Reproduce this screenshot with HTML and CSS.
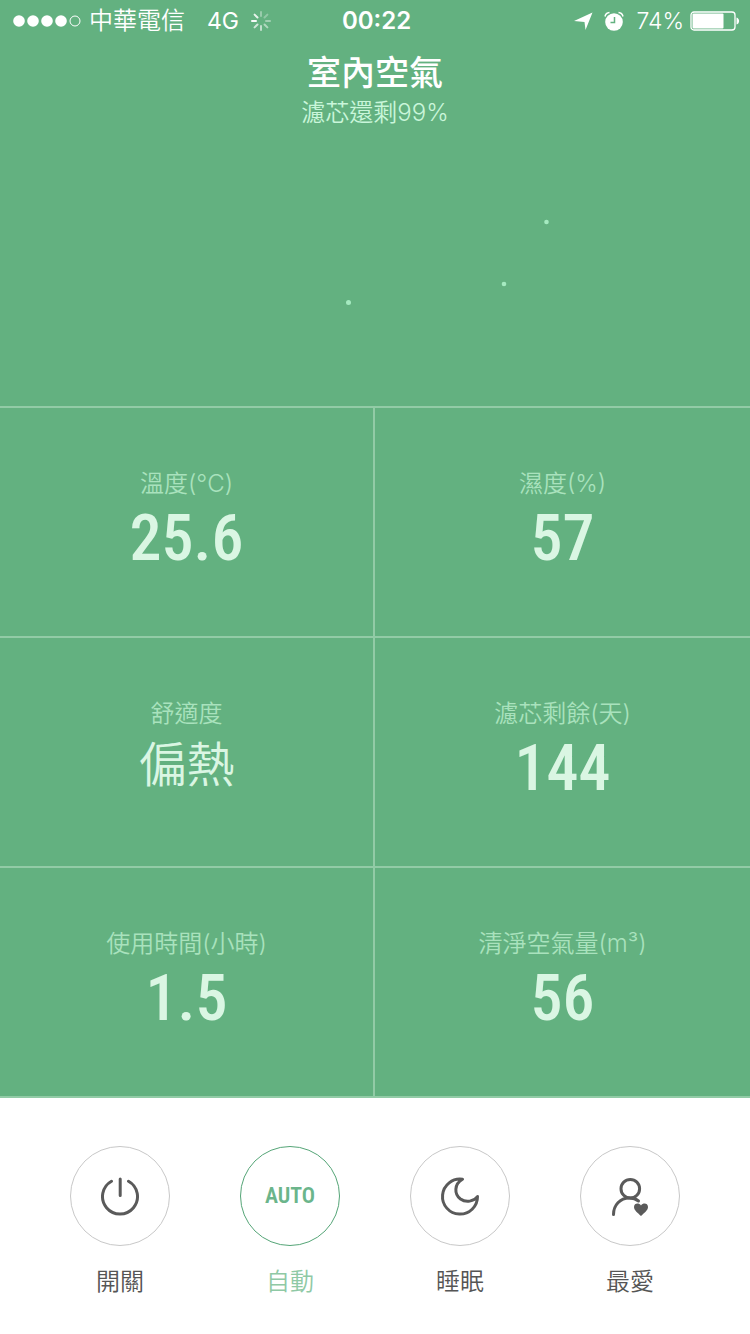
FILE: index.html
```
<!DOCTYPE html>
<html lang="zh-Hant">

<head>
    <meta charset="UTF-8">
    <meta name="viewport" content="width=device-width, initial-scale=1.0">
    <title>室內空氣</title>
    <link rel="stylesheet" href="styles.css">
</head>

<body>
    <div class="status-bar">
        <div class="status-left">
            <svg class="signal" width="68" height="12" viewBox="0 0 68 12" fill="#fff">
                <circle cx="6" cy="6" r="5.800"/>
                <circle cx="20" cy="6" r="5.800"/>
                <circle cx="34" cy="6" r="5.800"/>
                <circle cx="48" cy="6" r="5.800"/>
                <circle cx="62" cy="6" r="5" fill="none" stroke="#fff"/>
            </svg>
            <span class="carrier">中華電信</span>
            <span class="network">4G</span>
            <svg width="20" height="20" viewBox="-10 -10 20 20" stroke="#fff" stroke-width="2" stroke-linecap="round">
                <path d="M0-5V-9" opacity=".35"/>
                <path d="M3.500-3.500L6.400-6.400" opacity=".3"/>
                <path d="M5 0H9" opacity=".4"/>
                <path d="M3.500 3.500L6.400 6.400" opacity=".5"/>
                <path d="M0 5V9" opacity=".6"/>
                <path d="M-3.500 3.500L-6.400 6.400" opacity=".7"/>
                <path d="M-5 0H-9" opacity=".95"/>
                <path d="M-3.500-3.500L-6.400-6.400" opacity=".85"/>
            </svg>
        </div>
        <span class="clock">00:22</span>
        <div class="status-right">
            <svg width="20" height="20" viewBox="0 0 20 20" fill="#fff">
                <path d="M18.500 1.500L11.500 19L10.500 11L0 10Z"/>
            </svg>
            <svg width="20" height="20" viewBox="0 0 20 20">
                <circle cx="10" cy="11" r="8.800" fill="#fff"/>
                <path d="M1 5.500A5 5 0 0 1 5.500 1.500M19 5.500A5 5 0 0 0 14.500 1.500" fill="none" stroke="#fff" stroke-width="1.500"/>
                <path d="M10.500 6V11.500H6.500" fill="none" stroke="#63b180" stroke-width="1.500"/>
            </svg>
            <span class="percent">74%</span>
            <svg width="50" height="20" viewBox="0 0 50 20">
                <rect x="1" y="1" width="44" height="18" rx="3" fill="none" stroke="#fff" stroke-width="1.300"/>
                <rect x="2.500" y="2.500" width="31" height="15" rx="1" fill="#fff"/>
                <path d="M46.500 6.500C50 7.500 50 12.500 46.500 13.500Z" fill="#fff"/>
            </svg>
        </div>
    </div>

    <main>
        <div class="hero">
            <h1>室內空氣</h1>
            <p>濾芯還剩99%</p>
            <svg class="particles" viewBox="0 0 750 200" fill="#a5eac0">
                <circle cx="546.500" cy="62" r="2.300"/>
                <circle cx="504" cy="124" r="2.300"/>
                <circle cx="348.500" cy="142.500" r="2.500"/>
            </svg>
        </div>

        <div class="stats">
            <div class="stat">
                <span class="label">溫度(°C)</span>
                <span class="value">25.6</span>
            </div>
            <div class="stat">
                <span class="label">濕度(%)</span>
                <span class="value">57</span>
            </div>
            <div class="stat">
                <span class="label">舒適度</span>
                <span class="value value-text">偏熱</span>
            </div>
            <div class="stat">
                <span class="label">濾芯剩餘(天)</span>
                <span class="value">144</span>
            </div>
            <div class="stat">
                <span class="label">使用時間(小時)</span>
                <span class="value">1.5</span>
            </div>
            <div class="stat">
                <span class="label">清淨空氣量(m³)</span>
                <span class="value">56</span>
            </div>
        </div>
    </main>

    <footer class="controls">
        <button type="button" class="control">
            <span class="circle">
                <svg width="40" height="40" viewBox="0 0 40 40">
                    <path d="M11.500 5.200A17.500 17.500 0 1 0 28.500 5.200M20.200 3V19.500"/>
                </svg>
            </span>
            <span>開關</span>
        </button>
        <button type="button" class="control active">
            <span class="circle">AUTO</span>
            <span>自動</span>
        </button>
        <button type="button" class="control">
            <span class="circle">
                <svg width="40" height="40" viewBox="0 0 40 40">
                    <path d="M22.500 3.300A17.500 17.500 0 1 0 37.500 20.500C34 25.500 26 27 20.500 23C14 18 14 8 22.500 3.300Z"/>
                </svg>
            </span>
            <span>睡眠</span>
        </button>
        <button type="button" class="control">
            <span class="circle">
                <svg width="40" height="40" viewBox="0 0 40 40">
                    <circle cx="20.300" cy="12.700" r="9.300"/>
                    <path d="M3.500 38.500C3.500 29 10 22 19.500 22C23 22 26 23 28.500 25"/>
                    <path class="heart" d="M31 40C28 37 24 34.500 24 31C24 27 29 26.500 31 29.500C33 26.500 38 27 38 31C38 34.500 34 37 31 40Z"/>
                </svg>
            </span>
            <span>最愛</span>
        </button>
    </footer>
</body>

</html>
```
FILE: styles.css
```
* {
    box-sizing: border-box;
}

body {
    display: flex;
    flex-direction: column;
    min-height: 100vh;
    margin: 0;
    background-color: #63b180;
    color: #fff;
    font-family: Inter, "Noto Sans CJK TC", sans-serif;
    font-size: 24px;
}

.status-bar {
    display: grid;
    grid-template-columns: 1fr auto 1fr;
    align-items: center;
    height: 40px;
    padding: 0 10px 0 13px;
    line-height: 42px;
}

.status-left,
.status-right {
    display: flex;
    align-items: center;
}

.status-right {
    justify-content: flex-end;
    gap: 6px;
}

.status-right svg:first-child {
    margin-right: 4px;
}

.carrier {
    margin: 0 22px 0 8px;
    font-weight: 350;
}

.network {
    margin-right: 12px;
    font-size: 23px;
}

.clock {
    font-size: 24px;
    font-weight: 600;
}

.percent {
    margin-left: 6px;
    font-size: 23px;
    font-weight: 350;
}

main {
    display: flex;
    flex: 1;
    flex-direction: column;
}

.hero {
    flex: 1;
    padding-top: 12px;
    text-align: center;
}

h1 {
    margin: 0;
    font-size: 34px;
    font-weight: 500;
    line-height: 42px;
}

.hero p {
    margin: 0;
    color: #c9f6da;
    font-weight: 350;
    line-height: 38px;
}

.particles {
    display: block;
    width: 100%;
    margin-top: 28px;
}

.stats {
    display: grid;
    grid-template-columns: 1fr 1fr;
    border-bottom: 2px solid #92cba6;
}

.stat {
    display: flex;
    flex-direction: column;
    align-items: center;
    min-height: 230px;
    padding-top: 58px;
    border-top: 2px solid #92cba6;
}

.stat:nth-child(odd) {
    border-right: 2px solid #92cba6;
}

.label {
    color: #a9e2bd;
    font-weight: 350;
    line-height: 36px;
}

.value {
    color: #daf6e3;
    font-family: "Roboto Condensed", "Liberation Sans Narrow", "Noto Sans CJK TC", sans-serif;
    font-size: 64px;
    font-weight: 500;
    line-height: 74px;
}

.value-text {
    font-size: 48px;
    font-weight: 350;
    line-height: 68px;
}

.controls {
    display: grid;
    grid-template-columns: repeat(4, 1fr);
    padding: 48px 35px 34px;
    background-color: #fff;
}

.control {
    display: flex;
    flex-direction: column;
    align-items: center;
    gap: 18px;
    padding: 0;
    border: none;
    background: none;
    color: #555;
    font: inherit;
    font-weight: 350;
    line-height: 36px;
    cursor: pointer;
}

.circle {
    display: flex;
    align-items: center;
    justify-content: center;
    width: 100px;
    height: 100px;
    border: 1px solid #c8c8c8;
    border-radius: 50%;
}

.circle svg {
    fill: none;
    stroke: #5a5a5a;
    stroke-width: 3;
    stroke-linecap: round;
    stroke-linejoin: round;
}

.circle .heart {
    fill: #5a5a5a;
    stroke: none;
}

.active {
    color: #8fc9a5;
}

.active .circle {
    border-color: #55a577;
    color: #6bb58b;
    font-family: "Roboto Condensed", "Liberation Sans Narrow", sans-serif;
    font-size: 22px;
    font-weight: 600;
}
```
